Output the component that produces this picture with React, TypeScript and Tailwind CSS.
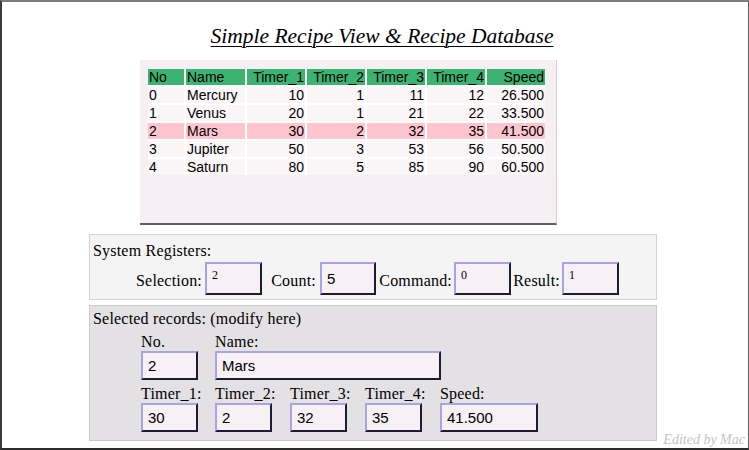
import React from 'react';

type Row = {
  no: number;
  name: string;
  t1: number;
  t2: number;
  t3: number;
  t4: number;
  speed: string;
};

const rows: Row[] = [
  { no: 0, name: 'Mercury', t1: 10, t2: 1, t3: 11, t4: 12, speed: '26.500' },
  { no: 1, name: 'Venus', t1: 20, t2: 1, t3: 21, t4: 22, speed: '33.500' },
  { no: 2, name: 'Mars', t1: 30, t2: 2, t3: 32, t4: 35, speed: '41.500' },
  { no: 3, name: 'Jupiter', t1: 50, t2: 3, t3: 53, t4: 56, speed: '50.500' },
  { no: 4, name: 'Saturn', t1: 80, t2: 5, t3: 85, t4: 90, speed: '60.500' },
];

const selected = 2;

const serif = "font-['Liberation_Serif',serif]";
const sans = "font-['Liberation_Sans',Arial,sans-serif]";

function Field({
  value,
  className,
  textClass,
}: {
  value: string;
  className: string;
  textClass?: string;
}) {
  return (
    <div
      className={`flex items-center bg-[#f7f0f4] border-t-2 border-l-2 border-t-[#a7a3e4] border-l-[#a7a3e4] border-b-2 border-r-2 border-b-[#1c1c34] border-r-[#1c1c34] pl-[5px] ${className}`}
    >
      <span className={textClass ?? `${sans} text-[15px] leading-none tracking-normal text-black`}>
        {value}
      </span>
    </div>
  );
}

// label above an input box; the column keeps the box width so labels may overhang
function Labeled({
  label,
  value,
  width,
  className = '',
}: {
  label: string;
  value: string;
  width: string;
  className?: string;
}) {
  return (
    <div className={`flex flex-col ${width} ${className}`}>
      <span className="whitespace-nowrap">{label}</span>
      <Field value={value} className={`${width} h-[29px]`} />
    </div>
  );
}

function RecipeTable() {
  const head = 'bg-[#3cb371] h-[16px] leading-[16px] text-[14px]';
  return (
    <div
      className={`grid grid-cols-[36px_59px_58px_58px_58px_58px_58px] gap-[2px] bg-white w-max ${sans}`}
    >
      <div className={`${head} pl-[1px]`}>No</div>
      <div className={`${head} pl-[1px]`}>Name</div>
      <div className={`${head} text-right pr-[1px]`}>Timer_1</div>
      <div className={`${head} text-right pr-[1px]`}>Timer_2</div>
      <div className={`${head} text-right pr-[1px]`}>Timer_3</div>
      <div className={`${head} text-right pr-[1px]`}>Timer_4</div>
      <div className={`${head} text-right pr-[1px]`}>Speed</div>
      {rows.map((r) => {
        const bg = r.no === selected ? 'bg-[#ffc5cf]' : 'bg-[#faf6f8]';
        const cell = `${bg} h-[16px] leading-[16px] text-[14px]`;
        return (
          <React.Fragment key={r.no}>
            <div className={`${cell} pl-[1px]`}>{r.no}</div>
            <div className={`${cell} pl-[1px]`}>{r.name}</div>
            <div className={`${cell} text-right pr-[1px]`}>{r.t1}</div>
            <div className={`${cell} text-right pr-[1px]`}>{r.t2}</div>
            <div className={`${cell} text-right pr-[1px]`}>{r.t3}</div>
            <div className={`${cell} text-right pr-[1px]`}>{r.t4}</div>
            <div className={`${cell} text-right pr-[1px]`}>{r.speed}</div>
          </React.Fragment>
        );
      })}
    </div>
  );
}

export default function App() {
  const smallSerif = `${serif} text-[12px] leading-none tracking-normal text-black -mt-[8px]`;
  const r = rows[selected];

  return (
    <div
      className={`relative w-[749px] h-[450px] bg-white flex flex-col border-t-2 border-t-[#7c7c7c] border-l-2 border-l-[#3c3c3c] border-b-2 border-b-[#2c2c2c] border-r border-r-[#5c5c5c] text-black ${serif}`}
    >
      {/* heading */}
      <div className="h-[58px] pt-[21px] pl-[14px] flex justify-center">
        <h1 className="text-[21.5px] leading-[26px] italic underline underline-offset-[3px] decoration-1">
          Simple Recipe View &amp; Recipe Database
        </h1>
      </div>

      {/* table view */}
      <div className="ml-[138px] w-[417px] h-[165px] bg-[#f6eff3] border-b-2 border-b-[#606060] border-r border-r-[#d6ced2] pt-[9px] pl-[8px]">
        <RecipeTable />
      </div>

      {/* system registers */}
      <div className="mt-[9px] ml-[87px] w-[568px] h-[66px] bg-[#f4f4f4] border border-[#d2d2d2] text-[16px] tracking-[0.2px]">
        <div className="pt-[7px] pl-[3px] leading-[18px]">System Registers:</div>
        <div className="flex items-center mt-[2px] pl-[46px] leading-[18px]">
          <span className="w-[69px] text-right pr-[3px] pt-[5px] whitespace-nowrap">Selection:</span>
          <Field value="2" className="w-[57px] h-[33px]" textClass={smallSerif} />
          <span className="w-[58px] text-right pr-[4px] pt-[5px] whitespace-nowrap">Count:</span>
          <Field value="5" className="w-[56px] h-[33px]" />
          <span className="w-[78px] text-right pr-[2px] pt-[5px] whitespace-nowrap">Command:</span>
          <Field value="0" className="w-[57px] h-[33px]" textClass={smallSerif} />
          <span className="w-[51px] text-right pr-[2px] pt-[5px] whitespace-nowrap">Result:</span>
          <Field value="1" className="w-[57px] h-[33px]" textClass={smallSerif} />
        </div>
      </div>

      {/* selected record editor */}
      <div className="mt-[5px] ml-[87px] w-[568px] h-[136px] bg-[#e3e1e3] border border-[#c9c9c9] text-[16px] tracking-[0.2px] leading-[18px]">
        <div className="pt-[4px] pl-[3px]">Selected records: (modify here)</div>
        <div className="flex mt-[5px] pl-[51px]">
          <Labeled label="No." value={String(r.no)} width="w-[57px]" />
          <Labeled label="Name:" value={r.name} width="w-[226px]" className="ml-[17px]" />
        </div>
        <div className="flex mt-[5px] pl-[51px]">
          <Labeled label="Timer_1:" value={String(r.t1)} width="w-[57px]" />
          <Labeled label="Timer_2:" value={String(r.t2)} width="w-[57px]" className="ml-[17px]" />
          <Labeled label="Timer_3:" value={String(r.t3)} width="w-[57px]" className="ml-[18px]" />
          <Labeled label="Timer_4:" value={String(r.t4)} width="w-[57px]" className="ml-[18px]" />
          <Labeled label="Speed:" value={r.speed} width="w-[98px]" className="ml-[18px]" />
        </div>
      </div>

      <span className="absolute right-[3px] bottom-[0px] italic text-[14px] leading-[16px] text-[#c4c4c4]">
        Edited by Mac
      </span>
    </div>
  );
}
